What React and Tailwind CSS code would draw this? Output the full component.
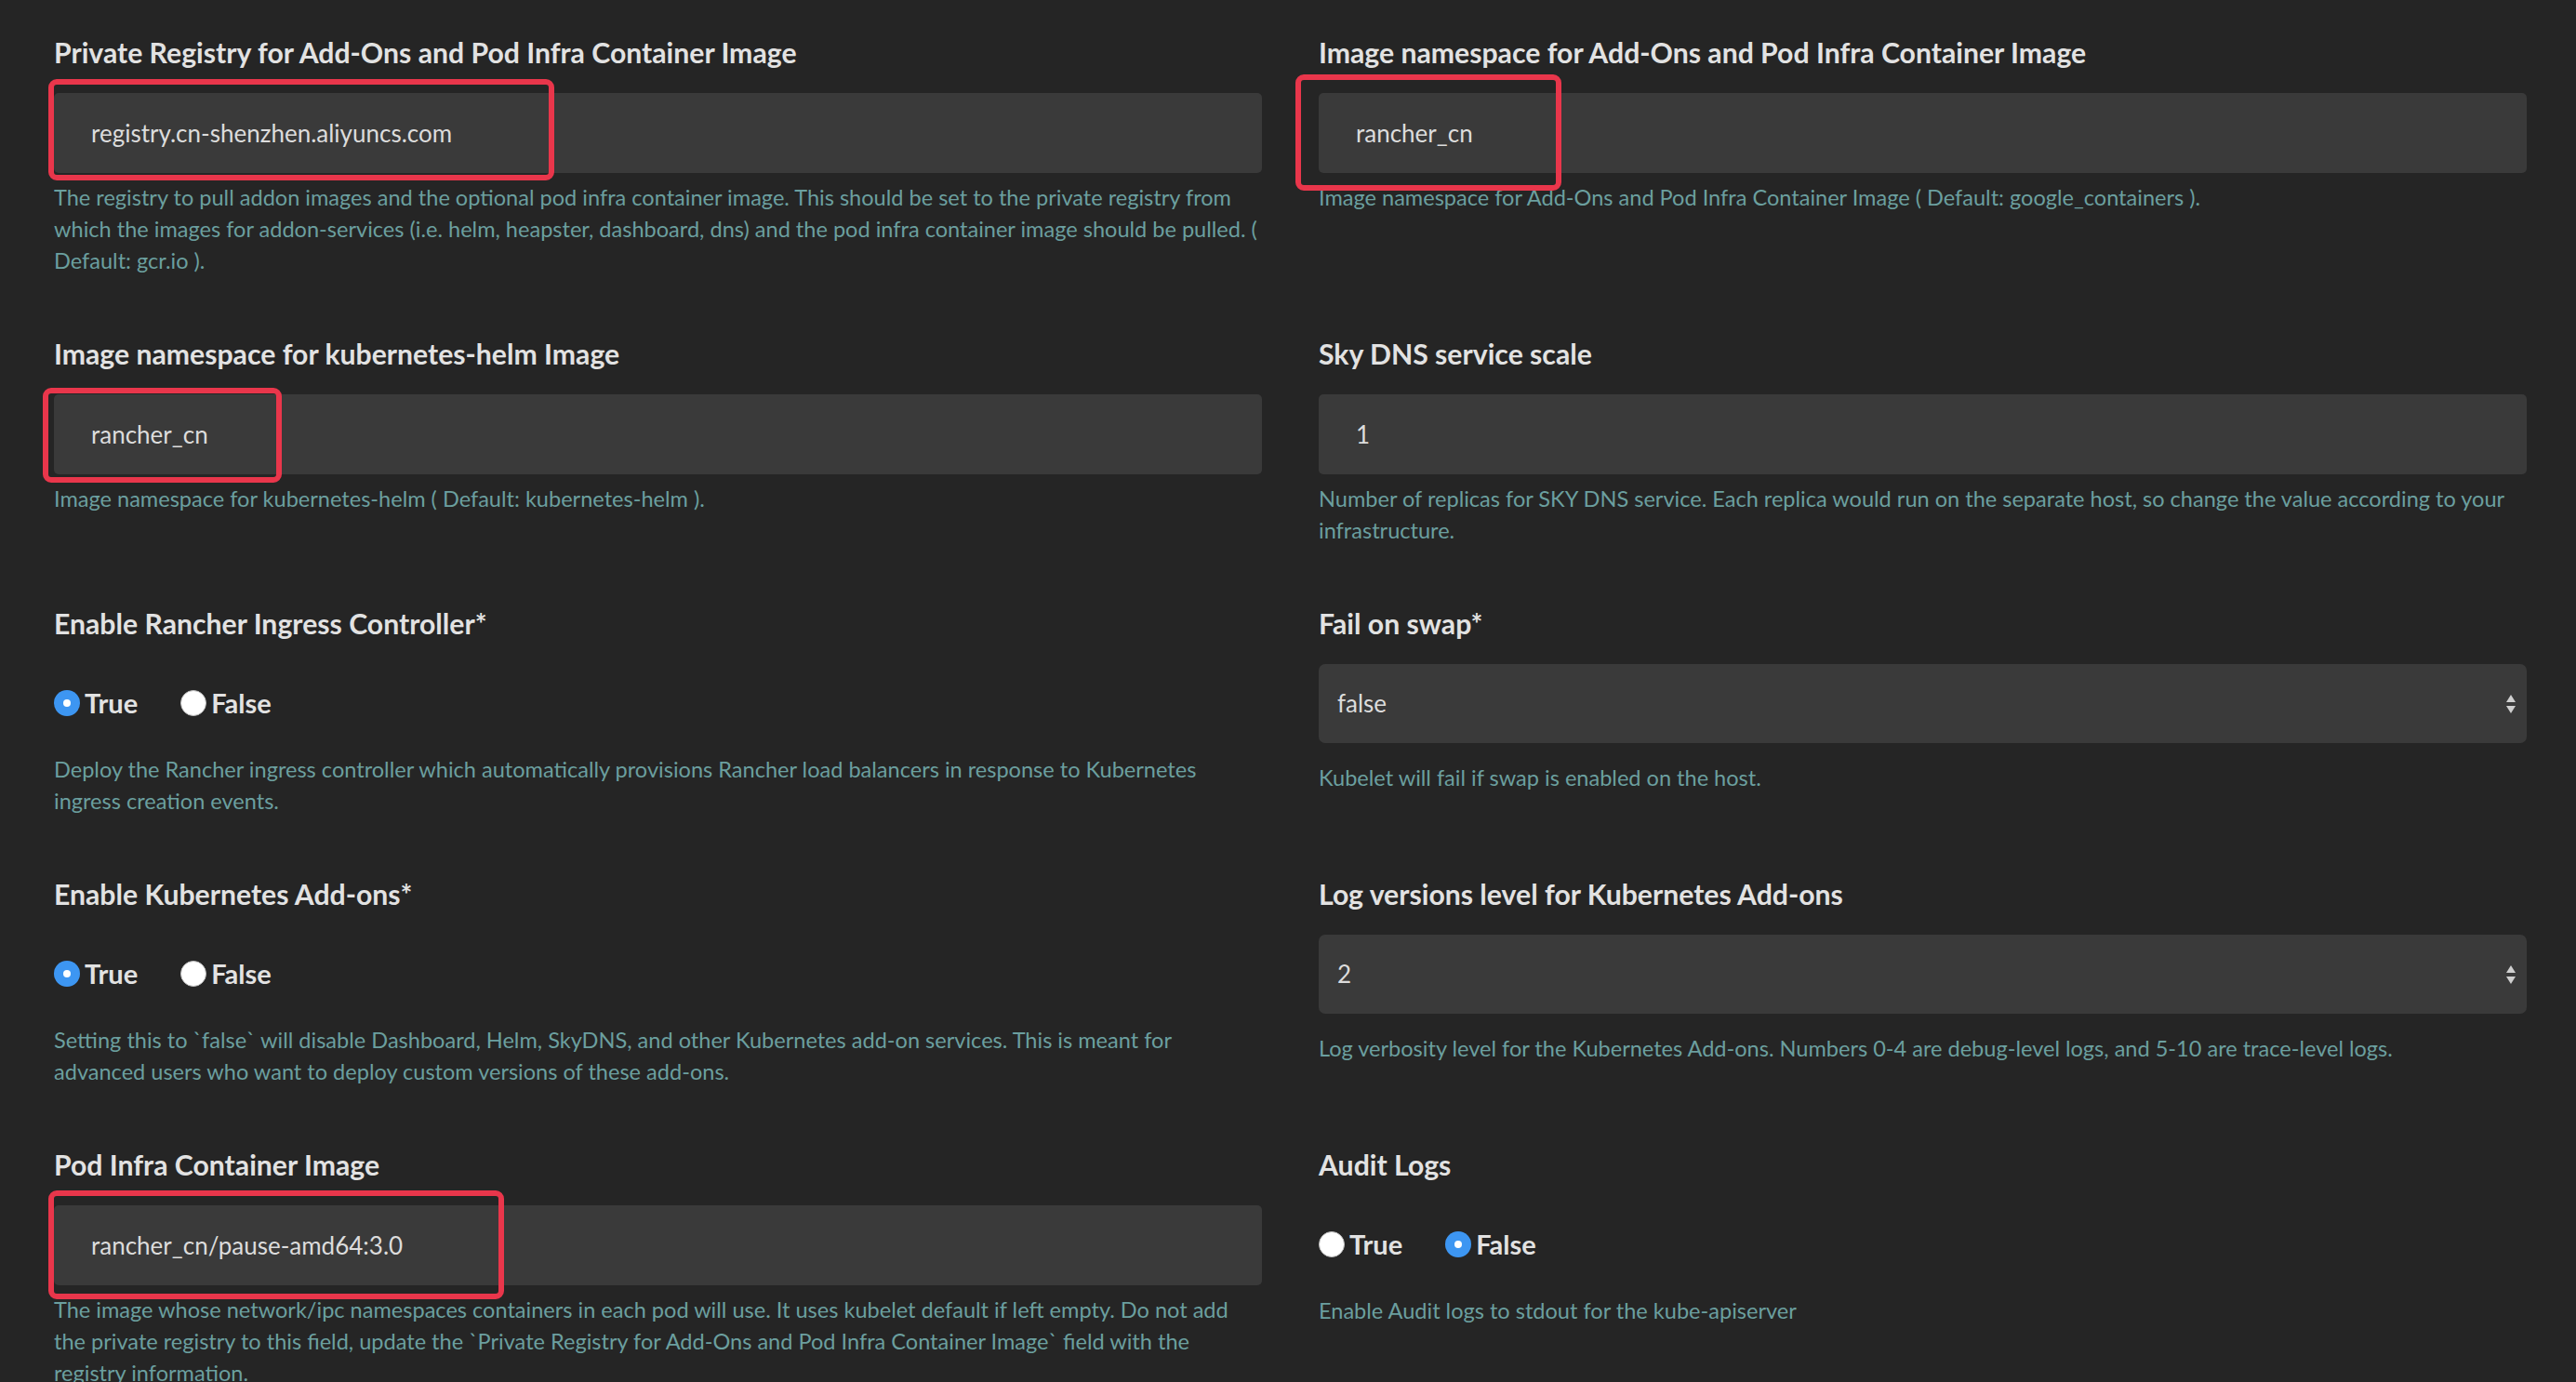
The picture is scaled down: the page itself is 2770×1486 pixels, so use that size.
import React from "react";

const HELP = "mt-[9px] text-[23.55px] leading-[34px] text-[#6b9f9f]";

function Mark({ className }) {
  return (
    <div className={"pointer-events-none absolute rounded-[9px] border-[6px] border-[#e9364b] " + className} />
  );
}

function TextInput({ value, mark }) {
  return (
    <div className="relative">
      <div className="flex h-[86px] items-center rounded-[5px] bg-[#3a3a3a] pl-[40px] text-[26px] text-[#dcdcdc]">
        {value}
      </div>
      {mark}
    </div>
  );
}

function Select({ value }) {
  return (
    <div className="flex h-[85px] items-center justify-between rounded-[7px] bg-[#3a3a3a] pl-[20px] pr-[11px] text-[26px] text-[#dcdcdc]">
      <span>{value}</span>
      <svg width="12" height="22" viewBox="0 0 12 22">
        <path d="M6 1 L11 9 L1 9 Z" fill="#cfcfcf" />
        <path d="M1 13 L11 13 L6 21 Z" fill="#cfcfcf" />
      </svg>
    </div>
  );
}

function Radio({ checked, label }) {
  return (
    <div className="flex items-center gap-[5px]">
      {checked ? (
        <span className="flex h-[28px] w-[28px] items-center justify-center rounded-full bg-[#3d96f2]">
          <span className="h-[8px] w-[8px] rounded-full bg-white" />
        </span>
      ) : (
        <span className="h-[28px] w-[28px] rounded-full border border-[#bdbdbd] bg-white" />
      )}
      <span className="text-[29px] font-bold text-[#e2e2e2]">{label}</span>
    </div>
  );
}

function RadioPair({ value }) {
  return (
    <div className="mt-[46px] flex h-[40px] items-center gap-[46px]">
      <Radio checked={value} label="True" />
      <Radio checked={!value} label="False" />
    </div>
  );
}

function Field({ label, children }) {
  return (
    <div>
      <div className="h-[40px] text-[30.2px] font-bold leading-[40px] text-[#e2e2e2]">{label}</div>
      {children}
    </div>
  );
}

export default function App() {
  return (
    <div className="min-h-screen bg-[#252525] pl-[58px] pt-[36px] font-['Lato',sans-serif]">
      <div className="grid grid-cols-[1299px_1299px] gap-x-[61px] gap-y-[63px]">
        <Field label="Private Registry for Add-Ons and Pod Infra Container Image">
          <div className="mt-[24px]">
            <TextInput
              value="registry.cn-shenzhen.aliyuncs.com"
              mark={<Mark className="-left-[6px] -top-[15px] h-[109px] w-[544px]" />}
            />
          </div>
          <p className={HELP}>
            The registry to pull addon images and the optional pod infra container image. This should be set to the private registry from which the images for addon-services (i.e. helm, heapster, dashboard, dns) and the pod infra container image should be pulled. ( Default: gcr.io ).
          </p>
        </Field>

        <Field label="Image namespace for Add-Ons and Pod Infra Container Image">
          <div className="mt-[24px]">
            <TextInput
              value="rancher_cn"
              mark={<Mark className="-left-[25px] -top-[20px] h-[125px] w-[286px]" />}
            />
          </div>
          <p className={HELP}>Image namespace for Add-Ons and Pod Infra Container Image ( Default: google_containers ).</p>
        </Field>

        <Field label="Image namespace for kubernetes-helm Image">
          <div className="mt-[24px]">
            <TextInput
              value="rancher_cn"
              mark={<Mark className="-left-[12px] -top-[7px] h-[102px] w-[257px]" />}
            />
          </div>
          <p className={HELP}>Image namespace for kubernetes-helm ( Default: kubernetes-helm ).</p>
        </Field>

        <Field label="Sky DNS service scale">
          <div className="mt-[24px]">
            <TextInput value="1" />
          </div>
          <p className={HELP}>
            Number of replicas for SKY DNS service. Each replica would run on the separate host, so change the value according to your infrastructure.
          </p>
        </Field>

        <Field label="Enable Rancher Ingress Controller*">
          <RadioPair value={true} />
          <p className={HELP + " !mt-[34px]"}>
            Deploy the Rancher ingress controller which automatically provisions Rancher load balancers in response to Kubernetes ingress creation events.
          </p>
        </Field>

        <Field label="Fail on swap*">
          <div className="mt-[24px]">
            <Select value="false" />
          </div>
          <p className={HELP + " !mt-[20px]"}>Kubelet will fail if swap is enabled on the host.</p>
        </Field>

        <Field label="Enable Kubernetes Add-ons*">
          <RadioPair value={true} />
          <p className={HELP + " !mt-[34px]"}>
            Setting this to `false` will disable Dashboard, Helm, SkyDNS, and other Kubernetes add-on services. This is meant for advanced users who want to deploy custom versions of these add-ons.
          </p>
        </Field>

        <Field label="Log versions level for Kubernetes Add-ons">
          <div className="mt-[24px]">
            <Select value="2" />
          </div>
          <p className={HELP + " !mt-[20px]"}>
            Log verbosity level for the Kubernetes Add-ons. Numbers 0-4 are debug-level logs, and 5-10 are trace-level logs.
          </p>
        </Field>

        <Field label="Pod Infra Container Image">
          <div className="mt-[24px]">
            <TextInput
              value="rancher_cn/pause-amd64:3.0"
              mark={<Mark className="-left-[6px] -top-[16px] h-[117px] w-[490px]" />}
            />
          </div>
          <p className={HELP}>
            The image whose network/ipc namespaces containers in each pod will use. It uses kubelet default if left empty. Do not add the private registry to this field, update the `Private Registry for Add-Ons and Pod Infra Container Image` field with the registry information.
          </p>
        </Field>

        <Field label="Audit Logs">
          <RadioPair value={false} />
          <p className={HELP + " !mt-[34px]"}>Enable Audit logs to stdout for the kube-apiserver</p>
        </Field>
      </div>
    </div>
  );
}
